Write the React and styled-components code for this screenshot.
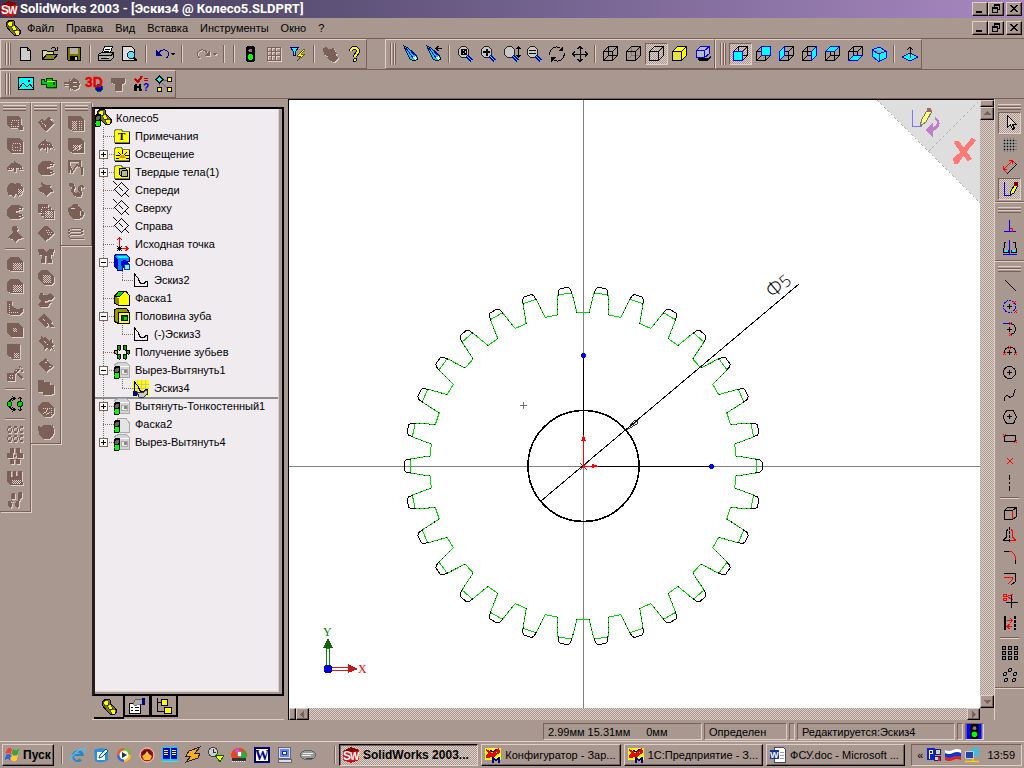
import React, { useState } from "react";
import styled, { createGlobalStyle, css } from "styled-components";

const face = "#a89890";
const dark = "#7b6058";
const light = "#ded0c8";
const dither = `repeating-conic-gradient(${light} 0 25%, ${face} 0 50%) 0 0 / 2px 2px`;

const GlobalStyle = createGlobalStyle`
  * { box-sizing: border-box; }
  body {
    margin: 0;
    background: ${face};
    color: #000;
    font: 11px/14px "Liberation Sans", Arial, sans-serif;
    overflow: hidden;
  }
  button { font: inherit; color: inherit; border: 0; background: none; padding: 0; }
  ul { list-style: none; margin: 0; padding: 0; }
`;

const raised = css`
  background: ${face};
  border: 1px solid;
  border-color: ${light} #000 #000 ${light};
  box-shadow: inset -1px -1px 0 ${dark};
`;
const sunken = css`
  border: 1px solid;
  border-color: ${dark} ${light} ${light} ${dark};
`;

const Screen = styled.div`
  display: flex;
  flex-direction: column;
  min-height: 100vh;
`;
const TitleBar = styled.header`
  display: flex;
  align-items: center;
  gap: 3px;
  height: 18px;
  padding: 0 2px 0 1px;
  background: linear-gradient(90deg, #3c3852, #70608c 50%, #a888c0);
`;
const Title = styled.h1`
  flex: 1;
  margin: 0;
  font-family: Roboto, "Liberation Sans", sans-serif;
  font-size: 13px;
  line-height: 16px;
  color: #fff;
  white-space: nowrap;
`;
const MenuBar = styled.nav`
  display: flex;
  align-items: center;
  height: 20px;
  padding: 0 2px 0 5px;
`;
const MenuItem = styled.button`
  padding: 0 6px;
`;
const Spacer = styled.div`
  flex: 1;
`;
const WindowControls = styled.div`
  display: flex;
  button:last-child {
    margin-left: 2px;
  }
`;
const WinButton = styled.button`
  ${raised}
  display: flex;
  width: 16px;
  height: 14px;
`;
const ToolRow = styled.div`
  display: flex;
  height: ${(p) => p.$height}px;
  border-top: 1px solid ${dark};
`;
const Toolbar = styled.div`
  display: flex;
  align-items: center;
  border: 1px solid;
  border-color: ${light} ${dark} ${dark} ${light};
  box-shadow: 0 1px 0 ${light};
`;
const Grip = styled.div`
  width: 6px;
  height: 22px;
  margin: 0 3px 0 4px;
  border: solid ${dark};
  border-width: 0 1px;
  background: linear-gradient(90deg, ${light} 1px, ${face} 1px 2px, ${dark} 2px 3px, ${light} 3px);
`;
const HGrip = styled.div`
  width: 23px;
  height: 6px;
  margin: 5px auto 2px;
  border: solid ${dark};
  border-width: 0 0 1px;
  background: linear-gradient(${light} 1px, ${face} 1px 2px, ${dark} 2px 3px, ${light} 3px 4px, ${face} 4px);
`;
const Tool = styled.button`
  display: flex;
  align-items: center;
  justify-content: center;
  width: ${(p) => p.$w || 23}px;
  height: 22px;
  ${(p) =>
    p.$on &&
    css`
      ${sunken}
      background: ${dither};
    `}
`;
const Sep = styled.div`
  width: ${(p) => p.$w || 8}px;
  height: 18px;
  background: linear-gradient(90deg, ${dark} 1px, ${light} 1px) center / 2px 100% no-repeat;
`;
const HSep = styled.div`
  height: 8px;
  margin: 0 5px;
  background: linear-gradient(${dark} 1px, ${light} 1px) center / 100% 2px no-repeat;
`;
const Gap = styled.div`
  width: ${(p) => p.$w}px;
`;
const Main = styled.main`
  flex: 1;
  display: grid;
  grid-template-columns: 92px 193px minmax(0, 1fr) 30px;
  border-top: 1px solid ${dark};
`;
const FeatureBars = styled.div`
  display: flex;
  align-items: flex-start;
  padding-top: 3px;
`;
const FeatureBar = styled.div`
  flex: 1;
  display: flex;
  flex-direction: column;
  border: 1px solid;
  border-color: ${light} ${dark} ${dark} ${light};
  border-left: 0;
  box-shadow: 1px 1px 0 ${light};
  > button {
    width: 100%;
    height: 22px;
  }
  > ${HGrip} {
    margin: 2px auto;
  }
`;
const RightBars = styled.div`
  display: flex;
  flex-direction: column;
  border-left: 1px solid ${light};
`;
const RightBar = styled.div`
  border-bottom: 1px solid ${dark};
  box-shadow: 0 1px 0 ${light};
  padding-bottom: 1px;
  > button {
    margin: 0 auto;
  }
`;
const TreePanel = styled.aside`
  display: flex;
  flex-direction: column;
  padding: 8px 1px 0 0;
`;
const TreeFrame = styled.div`
  flex: 1;
  border: solid #000;
  border-width: 2px 2px 2px 3px;
  border-left-color: #2b1e1a;
  padding: 0 3px 2px 0;
  background: ${face};
  display: flex;
`;
const Tree = styled.ul`
  flex: 1;
  border: solid ${light};
  border-width: 0 1px 1px 0;
  background: #efebef;
`;
const TreeRow = styled.li`
  display: flex;
  align-items: center;
  height: 18px;
  box-shadow: ${(p) => (p.$rollback ? "0 2px 0 #8c8c88" : "none")};
  span {
    padding-left: 5px;
    white-space: nowrap;
  }
`;
const dotsV = "repeating-linear-gradient(#85706a 0 1px, transparent 1px 2px)";
const dotsH = "repeating-linear-gradient(90deg, #85706a 0 1px, transparent 1px 2px)";
const Branch = styled.div`
  display: flex;
  align-items: center;
  align-self: stretch;
  width: 19px;
  padding-left: 4px;
  background:
    ${(p) => (p.$through ? "none" : dotsH)} 8px 50% / 11px 1px no-repeat,
    ${dotsV} 8px 0 / 1px ${(p) => (p.$end ? "50%" : "100%")} no-repeat;
`;
const Toggle = styled.button`
  width: 9px;
  height: 9px;
  border: 1px solid #7b6058;
  background:
    linear-gradient(#000, #000) center / 5px 1px no-repeat,
    linear-gradient(#000, #000) center / ${(p) => (p.$open ? 0 : 1)}px 5px no-repeat,
    #fff;
`;
const PanelTabs = styled.div`
  display: flex;
  align-items: flex-start;
  height: 24px;
  padding-left: 2px;
  border-bottom: 1px solid ${light};
`;
const PanelTab = styled.button`
  display: flex;
  align-items: center;
  justify-content: center;
  width: ${(p) => (p.$on ? 30 : 27)}px;
  height: ${(p) => (p.$on ? 23 : 21)}px;
  border: solid #000;
  border-width: ${(p) => (p.$on ? "0 1px 2px 0" : "0 2px 2px 1px")};
`;
const ViewFrame = styled.section`
  display: grid;
  grid-template-columns: minmax(0, 1fr) 14px;
  grid-template-rows: minmax(0, 1fr) 12px;
  margin-left: 3px;
  border: solid #000;
  border-width: 1px 0 0 1px;
`;
const Canvas = styled.svg`
  display: block;
  width: 100%;
  height: 100%;
  min-height: 0;
  background: #fff;
`;
const ScrollBar = styled.div`
  display: flex;
  flex-direction: ${(p) => (p.$vertical ? "column" : "row")};
  background: ${dither};
`;
const SplitBox = styled.div`
  ${raised}
  flex: 0 0 7px;
`;
const ScrollButton = styled.button`
  ${raised}
  flex: 0 0 13px;
  display: flex;
  align-items: center;
  justify-content: center;
`;
const StatusBar = styled.footer`
  display: flex;
  align-items: center;
  justify-content: flex-end;
  gap: 2px;
  height: 21px;
  padding: 2px 40px 0 0;
`;
const Cell = styled.div`
  ${sunken}
  display: flex;
  align-items: center;
  gap: 16px;
  height: 17px;
  width: ${(p) => p.$w}px;
  padding-left: ${(p) => (p.$w > 30 ? 4 : 1)}px;
  white-space: pre;
`;
const TaskBar = styled.footer`
  display: flex;
  align-items: center;
  height: 27px;
  padding: 0 2px;
  border-top: 1px solid ${light};
`;
const StartButton = styled.button`
  ${raised}
  display: flex;
  align-items: center;
  gap: 2px;
  flex: none;
  width: 52px;
  height: 22px;
  padding-left: 2px;
  font-weight: bold;
  font-size: 12px;
`;
const QuickLaunch = styled.div`
  display: flex;
  flex: none;
`;
const Tasks = styled.div`
  flex: 1;
  display: flex;
  gap: 3px;
  padding-right: 6px;
`;
const Task = styled.button`
  ${raised}
  flex: 1;
  display: flex;
  align-items: center;
  gap: 4px;
  min-width: 0;
  height: 22px;
  padding: 0 3px;
  span {
    white-space: nowrap;
    overflow: hidden;
  }
  ${(p) =>
    p.$on &&
    css`
      background: ${dither};
      border-color: #000 ${light} ${light} #000;
      box-shadow: inset 1px 1px 0 ${dark};
      font-weight: bold;
      font-size: 12px;
    `}
`;
const Tray = styled.div`
  ${sunken}
  display: flex;
  align-items: center;
  gap: 3px;
  height: 22px;
  padding: 0 6px 0 5px;
  time {
    padding-left: 4px;
  }
`;

const Svg = styled.svg`
  display: block;
  flex: none;
  overflow: visible;
  ${(p) => p.$off && `filter: drop-shadow(1px 1px 0 ${light});`}
`;

const CUBE = "M.5 5.5h9v9h-9zM5.5.5h9v9h-9zM.5 5.5l5-5M9.5 5.5l5-5M9.5 14.5l5-5M.5 14.5l5-5";
const SOLID = "M.5 5.5h9v9h-9zM.5 5.5l5-5h9v9l-5 5M9.5 5.5l5-5";
const K = { stroke: "#000", fill: "none" };
const R = { stroke: "#f00", fill: "none" };
const B = { stroke: "#00f", fill: "none" };
const L = { stroke: light, fill: "none" };

// checkered patch inside the disabled icons
const mesh = (x, y, w, h) =>
  Array.from({ length: h }, (_, i) => (
    <path key={i} d={`M${x + (i % 2)} ${y + i}.5h${w - (i % 2)}`} stroke={light} strokeDasharray="1 1" />
  ));
const off = (d, extra) => (
  <>
    <path d={d} fillRule="evenodd" />
    {extra}
  </>
);
const cubeFace = (d) => (
  <>
    <path d={CUBE} {...K} />
    <path d={d} fill="#0ff" stroke="#00f" />
  </>
);
const lens = (extra) => (
  <>
    <path d="M10 10l5 5" stroke="#00a" strokeWidth="3" />
    <path d="M10 10l5 5" stroke="#0ff" />
    <circle cx="6.5" cy="6" r="5.5" fill="#c8c8c8" stroke="#222" />
    {extra}
  </>
);
const binoculars = (
  <>
    <path d="M1 0l4 2 8 7 2 4-4 2-4-2-4-8z" fill="#0cd" stroke="#013" />
    <path d="M3 2l7 10M8 6l5 4" stroke="#00f" />
    <path d="M10 11l3-1 1 3-2 1z" fill="#fff" />
  </>
);
const light3 = (
  <>
    <rect x="4" y="0" width="9" height="16" rx="3" fill="#000" />
    <circle cx="8.500" cy="4.500" r="2" fill="#977" />
    <circle cx="8.500" cy="11" r="3" fill="#0f0" />
  </>
);
const smallLight = (
  <>
    <rect x="0" y="4" width="6" height="13" rx="2" fill="#000" />
    <circle cx="3" cy="8" r="2" fill="#666" />
    <circle cx="3" cy="13.500" r="2.500" fill="#0f0" />
  </>
);
const part = (
  <>
    <path d="M1 3l4-3 4 1 1 4 4 4 2 3-2 3-4 1-4-4-5-6z" fill="#770" stroke="#000" />
    <path d="M2 3l4-2 2 2-1 3-3 1zM6 7l3-2 3 4-3 2zM9 11l4-1 2 2-1 3h-3z" fill="#ff0" stroke="#000" strokeWidth=".6" />
  </>
);
const ghostBox = (
  <>
    <path d="M.5 2.500l4-2h8l3 3v12h-11z" fill="#d4d4d4" stroke="#aaa" />
    <path d="M5 4.500h10" stroke="#fff" />
    <path d="M7.500 7.500h6v5h-6z" fill="#ececec" stroke="#aaa" />
    <path d="M10 8h3v3h-3z" fill="#888" />
  </>
);
const ghostChamfer = (
  <path d="M.5 7l4-5h7l4 5v9.500h-11L.5 14z" fill="#e4e4e4" stroke="#aaa" />
);
const folder = (mark) => (
  <>
    <path d="M.5 14.500V3l2-2h4l2 2h7v11.500z" fill="#ff0" stroke="#777" />
    <path d="M1 15h14.500V4" fill="none" stroke="#000" />
    {mark}
  </>
);
const swx = (
  <>
    <path d="M0 4l8-4 8 3v10l-8 3-8-3z" fill="#d01010" />
    <path d="M0 4l8-4 8 3-8 3z" fill="#800" />
    <text x="0" y="13" fontSize="12" fontWeight="bold" fill="#fff">S</text>
    <text x="7" y="13" fontSize="10" fontWeight="bold" fill="#fff">W</text>
  </>
);
const oneC = (
  <>
    <rect width="16" height="12" y="1" fill="#ff0" />
    <path d="M1 3l4 2-2 3 5-1 6-5M1 10l8-1 6-5" stroke="#e00" strokeWidth="2" fill="none" />
    <path d="M5 3l3 2 4-3" stroke="#00c" fill="none" />
    <path d="M8 10v6M8 11l3 2 3-2v5" stroke="#008" fill="none" strokeWidth="1.500" />
  </>
);
const plane = <path d="M.5 7.500l7-7 7 7-7 7zM-.5-.5l4 4M5.500 5.500l4 4M11.500 11.500l4 4" {...K} />;
const sketch = (
  <>
    <path d="M1.500 1v13.500h13V9" {...K} />
    <path d="M1.500 1.500l2 3 2 2 1 4 2 1 3 0 1-2h2" {...K} />
  </>
);

const icons = {
  swx,
  part,
  newDoc: <path d="M2.500 1.500h7l3 3v10h-10zM9.500 1.500v3h3" fill="#ccc" stroke="#000" />,
  open: (
    <>
      <path d="M.5 13.500V4.500h4l1 1h6v3" fill="#dd8" stroke="#000" />
      <path d="M.5 13.500l4-5h11l-4 5z" fill="#880" stroke="#000" />
      <path d="M9 3c2-3 4-2 5 1m-2 0h3V1" {...K} />
    </>
  ),
  save: (
    <>
      <path d="M1.500 1.500h13v13h-12l-1-1z" fill="#770" stroke="#000" />
      <path d="M4 2h8v6H4z" fill="#b8b0a8" />
      <path d="M4 10h8v4H4z" fill="#000" />
      <path d="M9 11h2v3H9z" fill="#ccc" />
    </>
  ),
  print: (
    <>
      <path d="M4.500 6.500l2-6h8l-2 6" fill="#fff" stroke="#000" />
      <path d="M.5 8.500l3-2h12v5l-3 3h-12z" fill="#aaa" stroke="#000" />
      <path d="M1 9.500h12l3-3M7 3h5M6 5h5M3 12.500h8" {...K} />
      <path d="M9 11h2" stroke="#ff0" />
    </>
  ),
  preview: (
    <>
      <path d="M.5.500h9l3 3v11h-12z" fill="#ddd" stroke="#000" />
      <path d="M11 11l4 4" stroke="#000" strokeWidth="2" />
      <circle cx="9" cy="9" r="3.500" fill="#6de" stroke="#222" />
    </>
  ),
  undo: (
    <>
      <path d="M2 4v6h6z" fill="#000090" />
      <path d="M5 7c2-4 8-4 9-1 1 3 0 5-2 6" stroke="#000090" fill="none" />
    </>
  ),
  redo: (
    <g filter={`drop-shadow(1px 1px 0 ${light})`}>
      <path d="M14 4v6H8z" fill="#7b6058" />
      <path d="M11 7C9 3 3 3 2 6c-1 3 0 5 2 6" stroke="#7b6058" fill="none" />
    </g>
  ),
  drop: <path d="M0 7h5L2.500 10z" fill="#000" />,
  dropOff: <path d="M0 7h5L2.500 10z" />,
  light3,
  gridOff: <path d="M1.500 1.500h13v13h-13zM1.500 5.500h13M1.500 9.500h13M5.500 1.500v13M9.500 1.500v13" fill="none" stroke="#7b6058" />,
  filter: (
    <>
      <path d="M.5 1.500h8l-3 4v4h-2v-4z" fill="#0ff" stroke="#006" />
      <path d="M14 3L7 10h4l-4 5 8-7h-4l4-4z" fill="#ff0" stroke="#330" strokeWidth=".7" />
    </>
  ),
  macroOff: <path d="M1 2l3-1 3 2 5-1 1 4 2 1-1 3 2 2-2 3-3 1-3-1-1-2-3-1 2-2-4-1z" />,
  help: (
    <>
      <path d="M5 5c0-4 7-4 7 0 0 3-3 3-3 6" fill="none" stroke="#000" strokeWidth="4" />
      <path d="M5 5c0-4 7-4 7 0 0 3-3 3-3 6" fill="none" stroke="#ff0" strokeWidth="2" />
      <circle cx="9" cy="14" r="1.500" fill="#ff0" stroke="#000" />
    </>
  ),
  binoculars,
  binocularsBack: (
    <>
      {binoculars}
      <path d="M10 2.500h6M12.500 0L10 2.500 12.500 5" {...K} />
    </>
  ),
  zoomFit: lens(<path d="M4 3.500h5v5H4zM4 3.500l5 5m0-5l-5 5" {...K} />),
  zoomIn: lens(<path d="M3 6h7M6.500 2.500v7" stroke="#000" strokeWidth="2" />),
  zoomDyn: lens(<path d="M15.500 1v10M13.500 3l2-2 2 2M13.500 9l2 2 2-2" {...K} />),
  zoomSel: lens(<path d="M3 4.500h7M3 7.500h7" stroke="#000" strokeWidth="1.500" />),
  rotate: (
    <>
      <path d="M1 9C0 3 6-1 11 2M15 7c1 6-5 10-10 7" {...K} />
      <path d="M14 0v5H9zM2 16v-5h5z" />
    </>
  ),
  pan: <path d="M8 0v16M0 8h16M5.500 3L8 .5 10.500 3M5.500 13L8 15.500 10.500 13M3 5.500L.5 8 3 10.500M13 5.500L15.500 8 13 10.500" {...K} />,
  wire: <path d={CUBE} {...K} />,
  hiddenGray: (
    <>
      <path d={CUBE} stroke="#777" fill="none" />
      <path d={SOLID} {...K} />
    </>
  ),
  hidden: <path d={SOLID} {...K} />,
  shaded: (
    <>
      <path d={SOLID} fill="#ff0" stroke="#000" />
      <path d="M1 6h8v8H1z" fill="#e8e040" />
    </>
  ),
  shadow: (
    <>
      <path d="M3 12h10l3-3v3l-4 3H4z" fill="#000" />
      <path d="M1.500 4.500h8v7h-8zM1.500 4.500l4-4h9v7l-5 4M9.500 4.500l5-4" fill="#bbb" stroke="#00f" />
    </>
  ),
  front: cubeFace("M.5 5.500h9v9h-9z"),
  back: cubeFace("M5.500.500h9v9h-9z"),
  left: cubeFace("M.5 5.500l5-5v9l-5 5z"),
  right: cubeFace("M9.500 5.500l5-5v9l-5 5z"),
  top: cubeFace("M.5 5.500l5-5h9l-5 5z"),
  bottom: cubeFace("M.5 14.500l5-5h9l-5 5z"),
  iso: <path d="M1 4l7-3 7 4v7l-7 3.500L2 11zM1 4l7 4 7-3M8 8v7.500" fill="#0ff" stroke="#00f" />,
  normal: (
    <>
      <path d="M0 11l8-4 8 4-8 4z" fill="#0ff" stroke="#00c" />
      <path d="M8 12V1M5 4l3-3 3 3" {...K} />
    </>
  ),
  picture: (
    <>
      <rect x=".5" y="1.500" width="15" height="12" fill="#0ff" stroke="#000" />
      <path d="M1 12l4-5 4 4 3-3 3 4" {...K} />
      <circle cx="11" cy="5" r="1" />
    </>
  ),
  camera: (
    <>
      <path d="M4 11h12v2H6z" fill="#776" />
      <path d="M0 3h3v2h2V2h6v2h4v7H5V8H0z" fill="#0c0" stroke="#030" />
      <path d="M6 5h8" stroke="#cf0" />
      <path d="M12 6h2v3h-2z" fill="#030" />
    </>
  ),
  plugOff: off("M0 6h5V3h1v2l4-3 4 2 2 4-2 5-4 1-4-2v2H5v-4H0V9h5V8H0z", <path d="M9 6h4M9 10h4" {...L} />),
  threeD: (
    <>
      <circle cx="12" cy="12" r="3.500" fill="#00c" stroke="#060" />
      <text x="-2" y="11" fontSize="14" fontWeight="bold" fill="#e00" stroke="#e00" strokeWidth=".4">3D</text>
    </>
  ),
  boltOff: off("M1 2h14v5l-3 1v7H5V8L1 7z"),
  check: (
    <>
      <path d="M2 3l3 3 4-6" stroke="#c00" strokeWidth="2" fill="none" />
      <path d="M11 2.500h4M11 4.500h4" stroke="#c00" />
      <path d="M2 8h2v2h2V8h2v3l1 4H6v-3H4v3H1v-4z" />
      <text x="10" y="15" fontSize="10" fontWeight="bold" fill="#00c">?</text>
    </>
  ),
  nodes: (
    <>
      <path d="M7 4h4M6 7l5 5M3 7v3" stroke="#666" />
      <path d="M0 3.500L3.500 0 7 3.500 3.500 7z" fill="#0ff" stroke="#000" />
      <path d="M11.500 1.500h4v4h-4zM11.500 11.500h4v4h-4zM1.500 11.500h4v4h-4z" fill="#ff0" stroke="#000" />
    </>
  ),
  pointer: <path d="M5.500.500v12l3-3 2 5 2-1-2-4h4z" fill={light} stroke="#000" />,
  gridDots: (
    <>
      <path d="M2.500 1v14M5.500 1v14M8.500 1v14M11.500 1v14M1 3.500h14M1 6.500h14M1 9.500h14M1 12.500h14" stroke="#777" fill="none" />
      <path d="M2 3.500h12M2 6.500h12M2 9.500h12M2 12.500h12" stroke="#000" strokeDasharray="1 2" />
    </>
  ),
  dimension: (
    <>
      <path d="M5.500 14.500l9-9M3 12l3 3M12 3l3 3" {...K} />
      <path d="M1.500 10.500l9-9M1.500 7v3.500H5M7 1.500h3.500V5M1 10l4 4M10.500 1.500l3 3" {...R} />
    </>
  ),
  sketchPen: (
    <>
      <path d="M2.500 1v13.500h6" {...B} />
      <path d="M8 14l1-4 4-7 3 1-4 8z" fill="#ff0" stroke="#000" />
      <circle cx="14" cy="3" r="2.500" fill="#700" />
    </>
  ),
  perp: (
    <>
      <path d="M7.500 2v12M2 13.500h12" {...B} />
      <path d="M8 10.500h2.500v3" {...R} />
    </>
  ),
  glasses: (
    <>
      <path d="M7.500 0v14M1 14.500h14" {...B} />
      <path d="M4 2.500H2.500V8M1.500 7.500v5h5v-3M11 2.500h2.500V8M14.500 7.500v5h-5v-3" {...K} />
      <path d="M3 10h3v2H3zM10 10h3v2h-3z" fill="#0ff" />
    </>
  ),
  line: <path d="M3 3l11 11" {...K} />,
  arcCenter: (
    <>
      <circle cx="7.500" cy="7.500" r="6" {...B} strokeDasharray="2 1" />
      <path d="M7.500 5v5M5 7.500h5" {...K} />
      <path d="M11 2l3 3m0-3l-3 3M12 11l3 3m0-3l-3 3" {...R} />
    </>
  ),
  arcTangent: (
    <>
      <path d="M1 2.500h7" {...B} />
      <path d="M8 2.500a5.500 5.500 0 010 11M7.500 6v5M5 8.500h5" {...K} />
      <path d="M7 1l3 3m0-3L7 4M7 12l3 3m0-3l-3 3" {...R} />
    </>
  ),
  arc3: (
    <>
      <path d="M2 10a6 6 0 0112 0M7.500 7v5M5 9.500h5" {...K} />
      <path d="M1 9l3 3m0-3l-3 3M12 9l3 3m0-3l-3 3M6 3l3 3m0-3L6 6" {...R} />
    </>
  ),
  circle: <path d="M7.500 1.500a6 6 0 100 12 6 6 0 100-12M7.500 5v5M5 7.500h5" {...K} />,
  spline: <path d="M2 14c0-3 2-6 3-6s1 3 4 2c4 0 2-4 4-7V2" {...K} />,
  polygon: <path d="M4.500 1.500h7L14.500 8l-3 6.500h-7L1 8zM7.500 5v5M5 7.500h5" {...K} />,
  rect: (
    <>
      <path d="M2.500 4.500h11v6h-11z" {...K} />
      <path d="M1 3l3 3m0-3L1 6M12 9l3 3m0-3l-3 3" {...R} />
    </>
  ),
  point: <path d="M5 5l6 6M11 5l-6 6" {...R} />,
  centerline: <path d="M7.500 0v16" {...K} strokeDasharray="5 2 2 2" />,
  convert: (
    <>
      <path d="M2.500 5.500h8v9h-8zM2.500 5.500l3-3h9v9l-4 3M10.500 5.500l4-3" {...K} />
      <path d="M10.500 6v8" {...R} />
    </>
  ),
  mirror: (
    <>
      <path d="M7.500 0v16" {...K} strokeDasharray="3 1" />
      <path d="M6 2.500L4.500 4v6L1.500 13v.5H7" {...K} />
      <path d="M9 2.500L10.500 4v6l3 3v.5H8" {...R} />
    </>
  ),
  fillet: (
    <>
      <path d="M2 2.500h5M13.500 10v5" {...K} />
      <path d="M7 2.500c4 0 6.500 3 6.500 8" {...R} />
    </>
  ),
  offset: (
    <>
      <path d="M2 2.500h11.500v8L9 14" {...K} />
      <path d="M2 6.500h8.500v2L6 13" {...R} />
    </>
  ),
  trim: (
    <>
      <path d="M4 4l7-3M4 3l7 4M1.500 1.500h3v2h-3zM1.500 5.500h3v2h-3z" {...R} />
      <path d="M9.500 2v13M4 9.500h12" {...K} />
    </>
  ),
  extend: (
    <>
      <path d="M3 1v14" stroke="#000" strokeWidth="2" />
      <path d="M13 1v14" stroke="#000" strokeWidth="2" strokeDasharray="3 1" />
      <path d="M5 5.500h5M8 3l2.500 2.500L8 8M5 11.500h5M7.500 9L5 11.500 7.500 14" {...R} />
    </>
  ),
  pattern: <path d="M.5 1.500h3v3h-3zM6.500 1.500h3v3h-3zM12.500 1.500h3v3h-3zM.5 6.500h3v3h-3zM6.500 6.500h3v3h-3zM12.500 6.500h3v3h-3zM.5 11.500h3v3h-3zM6.500 11.500h3v3h-3zM12.500 11.500h3v3h-3z" fill="#888" stroke="#000" strokeWidth="1.300" />,
  circPattern: (
    <g fill="#999" stroke="#000">
      <circle cx="8" cy="3" r="1.500" />
      <circle cx="3" cy="7" r="1.500" />
      <circle cx="13" cy="7" r="1.500" />
      <circle cx="4" cy="13" r="1.500" />
      <circle cx="12" cy="13" r="1.500" />
    </g>
  ),
  moveGreen: (
    <>
      <path d="M7 2.500H5L2.500 5v6L5 13.500h2M5 0l3 2.500L5 5M5 11l3 2.500L5 16M13 1v14M11 3l2-2 2 2M11 13l2 2 2-2" {...K} />
      <circle cx="2.500" cy="8" r="2.500" fill="#0d0" stroke="#030" />
      <circle cx="13" cy="8" r="2.500" fill="#0d0" stroke="#030" />
    </>
  ),
  partLight: (
    <>
      <g transform="translate(1 -1)">{part}</g>
      {smallLight}
    </>
  ),
  notes: folder(<text x="4" y="12" fontSize="11" fontWeight="bold" fontFamily="Liberation Serif, serif">T</text>),
  lighting: folder(
    <>
      <path d="M5 12c0-4 7-4 7 0z" fill="#e80" />
      <path d="M2 12.500h3M12 12.500h3M4 6l3 3M13 6l-3 3M8.500 4v4M2 9.500h4M11 9.500h4" {...K} />
    </>
  ),
  bodies: folder(<path d="M5.500 4.500h6l2 2v6h-6l-2-2zM7.500 6.500h6M7.500 6.500v6" fill="#bb8" stroke="#000" />),
  plane,
  origin: (
    <>
      <path d="M5.500 11V2M3 4l2.500-2.500L8 4M6 12.500h8M11.500 10l2.500 2.500-2.500 2.500" {...R} />
      <path d="M3 12.500h5M5.500 10v5M3 10l5 5m0-5l-5 5" {...K} />
    </>
  ),
  base: (
    <>
      <path d="M0 2l3 3v11l-3-3z" fill="#00c" />
      <path d="M0 2l3-2h9l3 3v4h-4v3H8v6H3V5z" fill="#08f" stroke="#008" />
      <path d="M1 1.500h10l3 2H4z" fill="#0ff" />
      <path d="M7 7l4-1 4 4v5h-5l-3-4z" fill="#00c" />
      <path d="M10.500 10.500h5v5h-5z" fill="#8ef" stroke="#04c" />
    </>
  ),
  sketch,
  chamfer: (
    <>
      <path d="M.5 6L5 1h7l3.500 5v9.500h-10l-5-2z" fill="#ff0" stroke="#000" />
      <path d="M1 6l4-5 5 1-5 5z" fill="#0d0" stroke="#000" />
      <path d="M1 7l4 1v7l-4-2z" fill="#880" />
    </>
  ),
  tooth: (
    <>
      <path d="M.5 1.500l3-1h9l3 4v11h-11l-4-2z" fill="#990" stroke="#000" />
      <path d="M4.500 4.500h11v11h-11z" fill="#ff0" stroke="#000" />
      <path d="M7.500 7.500h6v5h-6z" fill="#050" stroke="#000" />
      <path d="M10 9h3v3h-3z" fill="#0d0" />
    </>
  ),
  teeth: (
    <g fill="#0a0" stroke="#000">
      <rect x="3.500" y="1" width="3" height="5" rx="1" />
      <rect x="9.500" y="1" width="3" height="5" rx="1" />
      <rect x="3.500" y="10" width="3" height="5" rx="1" />
      <rect x="9.500" y="10" width="3" height="5" rx="1" />
      <rect x=".5" y="6" width="3" height="4" rx="1" fill="#cc0" />
      <rect x="12.500" y="6" width="3" height="4" rx="1" />
    </g>
  ),
  ghost: (
    <>
      {ghostBox}
      {smallLight}
    </>
  ),
  ghostRound: (
    <>
      {ghostChamfer}
      {smallLight}
    </>
  ),
  sketchActive: (
    <>
      <path d="M0 0h16v16H0z" fill="#ff0" />
      <path d="M4.500 0v16M8.500 0v16M12.500 0v16M0 4.500h16M0 8.500h16" stroke="#cc8" />
      {sketch}
      <path d="M4 12l5 1 5-3 1 3-4 4H6z" fill="#ccc" stroke="#333" />
      <path d="M0 11h4v5H0z" fill="#008" />
    </>
  ),
  property: (
    <>
      <path d="M.5 5.500h11v10H.5z" fill="#fff" stroke="#000" />
      <path d="M2 9.500h2M6 9.500h4M2 12.500h2M6 12.500h4" stroke="#000" />
      <path d="M4 5l3-4h6v5H9L6 8z" fill="#aaa" stroke="#333" strokeWidth=".6" />
      <path d="M13 0h3v7h-3z" fill="#008" />
    </>
  ),
  config: (
    <>
      <path d="M1.500 0v13.500H8M1.500 4.500H6" {...K} />
      <path d="M5.500 1.500h6v6h-6zM8.500 9.500h7v6h-7z" fill="#ff0" stroke="#000" />
    </>
  ),
  windows: (
    <>
      <path d="M2 2q3-2 5 0L6 7Q4 5 1 7z" fill="#e43" />
      <path d="M8 2q3 2 6 0l-1 5q-3 2-6 0z" fill="#3a3" />
      <path d="M1 8q3-2 5 0l-1 5q-2-2-5 0z" fill="#36d" />
      <path d="M7 8q3 2 6 0l-1 5q-3 2-6 0z" fill="#fc2" />
    </>
  ),
  ie: (
    <g shapeRendering="auto">
      <path d="M4 9h10a6 6 0 10-2 4.500L9.500 11.500A3 3 0 014 10zM4.500 7a3 3 0 015.500 0z" fill="#28c" fillRule="evenodd" />
      <path d="M1 15c-3-3 7-13 13-14 3 0 1 3 0 5" fill="none" stroke="#5be" strokeWidth="1.300" />
    </g>
  ),
  mail: (
    <g shapeRendering="auto">
      <path d="M1 3q5-3 12-1l2 2v9q-6 4-13 1z" fill="#2a8fe0" />
      <path d="M4 5h8v8H4z" fill="#fff" />
      <path d="M6 11l1-3 6-6 2 2-6 6z" fill="#dff" stroke="#05a" />
    </g>
  ),
  media: (
    <g shapeRendering="auto">
      <path d="M8 8V1a7 7 0 017 7z" fill="#7b3" />
      <path d="M8 8h7a7 7 0 01-7 7z" fill="#fb2" />
      <path d="M8 8v7a7 7 0 01-7-7z" fill="#36d" />
      <path d="M8 8H1a7 7 0 017-7z" fill="#e52" />
      <circle cx="8" cy="8" r="4.500" fill="#fff" />
      <path d="M6 5l5 3-5 3z" fill="#234" />
    </g>
  ),
  flame: (
    <g shapeRendering="auto">
      <circle cx="8" cy="8" r="7" fill="#b11" stroke="#edd" />
      <circle cx="8" cy="8" r="5" fill="#511" />
      <path d="M3 9l3-2 2-3 2 3 3 2-2 4H5z" fill="#fb3" />
    </g>
  ),
  commander: (
    <>
      <path d="M.5.500h15v12H.5z" fill="#00c" stroke="#0cf" />
      <path d="M8 1v12M0 14.500h16" stroke="#0ff" />
      <path d="M2 3.500h4M2 5.500h4M2 7.500h4M10 3.500h4M10 5.500h4M10 7.500h4" stroke="#ff0" />
    </>
  ),
  winamp: <path d="M15 0L4 4 1 9h5l-5 6L13 11l2-5h-5z" fill="#f9b020" stroke="#222" />,
  search: (
    <>
      <circle cx="5" cy="5" r="4.500" fill="#ccc" stroke="#444" />
      <path d="M5 2v3h3M9 9l3 4" stroke="#333" fill="none" />
      <path d="M7 8h9l-4 7z" fill="#ff0" stroke="#060" />
    </>
  ),
  disc: (
    <>
      <path d="M1 11a7 7 0 017-10 7 7 0 017 10z" fill="#e42" />
      <path d="M9 7l5-4 1 8h-5z" fill="#1b3" />
      <path d="M8 7L3 4l5-3z" fill="#b5f" />
      <circle cx="8.500" cy="7" r="2.500" fill="#fff" stroke="#888" />
      <path d="M1 11h14v3H1z" fill="#333" />
      <path d="M1 14.500h14" stroke="#fff" strokeDasharray="1 1" />
    </>
  ),
  word: (
    <>
      <path d="M0 0h16v16H0z" fill="#008" />
      <path d="M1.500 1.500h13v13h-13z" fill="#fff" stroke="#003" />
      <text x="1" y="13" fontSize="14" fontWeight="bold" fontFamily="Liberation Serif, serif" fill="#008">W</text>
    </>
  ),
  monitor: (
    <>
      <path d="M1.500.500h12v11h-12zM1.500 12.500h13v3h-13z" fill="#dde" stroke="#667" />
      <path d="M3 2h9v8H3z" fill="#68d" />
      <circle cx="7.500" cy="6" r="2" fill="#fff" stroke="#13a" />
    </>
  ),
  oval: (
    <>
      <ellipse cx="8" cy="8" rx="7.500" ry="5" fill="#999" stroke="#666" />
      <path d="M3 6h10M2 8h9" stroke="#eee" />
      <path d="M6 11h7" stroke="#444" />
    </>
  ),
  oneC,
  doc: (
    <>
      <path d="M4.500.500h9l2 2v13h-11z" fill="#fff" stroke="#446" />
      <path d="M10 5h4M10 8h4M10 11h4" stroke="#99b" />
      <path d="M0 3h9v9H0z" fill="#139" />
      <text x="0" y="11" fontSize="9" fontWeight="bold" fill="#fff">W</text>
    </>
  ),
  netLight: (
    <>
      <path d="M1 1h8v12H1z" fill="#12c" />
      <path d="M3.500 3v9M3.500 3.500h3v3h-3" stroke="#fff" fill="none" />
      <path d="M9 2h5v5H9zM8 9h6v4H8z" fill="#ccd" stroke="#225" />
      <path d="M12 10h2v4h-2z" fill="#d22" />
    </>
  ),
  flag: (
    <g shapeRendering="auto">
      <path d="M0 3q4 2 8 0t8 0v5H0z" fill="#fff" />
      <path d="M0 6q4 2 8 0t8 0v4q-4-2-8 0T0 10z" fill="#13c" />
      <path d="M0 10q4 2 8 0t8 0v3q-4-2-8 0t-8 0z" fill="#d22" />
    </g>
  ),
  netPc: (
    <g shapeRendering="auto">
      <circle cx="11" cy="5" r="4.500" fill="#4bd" />
      <path d="M1.500 4.500h8v7h-8z" fill="#24a" stroke="#ccc" />
      <path d="M1 14.500h14M9 11v3" stroke="#fc0" strokeWidth="1.500" />
    </g>
  ),
  cutOff: off("M0 0h11l3 3v6l2 2v3h-4l-1-2H4l-4-3z", <path d="M4.500 4.500h7v6h-7z" {...L} strokeDasharray="1 1" />),
  boxOff: off("M0 0h12l4 4v11H5l-5-4z", <path d="M5.500 5.500h8v7h-8zM8 9h3" {...L} strokeDasharray="1 1" />),
  revolveOff: off("M8 0l1 3c4 0 6 3 7 7h-4l-2-2h-1l-1 8-1-8H6l-2 2H0c0-4 3-7 7-7z", <path d="M2 8.500h3M11 8.500h3" {...L} strokeDasharray="1 1" />),
  sphereOff: off("M3 1h4l1 2 1-2h4l3 5-1 6-4 2-2-3-2 4-3-2H1l-1-7z", mesh(11, 7, 4, 5)),
  sweepOff: off("M4 1h8l4 2-1 3-6 1v2l6 1 1 3-4 2H3l-3-4V5z", <path d="M12 4.500h2M12 12.500h2" {...L} />),
  bellOff: off("M6 0h4l1 3-1 3 6 6-5 1-3 3-3-3-5-1 6-6-1-3z"),
  domeOff: off("M0 4l4-3h7l5 5v9H4l-4-2z", mesh(6, 7, 9, 7)),
  cornerOff: off("M0 1h5v5l5 3 6-1v4l-4 3H4l-4-2z", <path d="M2 12.500h9M2.500 4v8" {...L} strokeDasharray="1 1" />),
  holeOff: off("M0 1h11l5 4v10H5l-5-4z", mesh(6, 6, 4, 4)),
  shellOff: off("M0 0h13v15H6l-6-4z", mesh(7, 9, 5, 5)),
  wandOff: off("M0 7h8v8H0zM9 8l2-2 5 6-2 1zM8 3h2v2H8zM12 0h2v3h-2zM14 4h2v2h-2zM6 6l8-5 1 1-7 6z", <path d="M2.500 9.500h3v3h-3z" {...L} strokeDasharray="1 1" />),
  patternOff: off("M1 0h3v7H1zM7 0h3v7H7zM13 0h3v7h-3zM1 9h3v7H1zM7 9h3v7H7zM13 9h3v7h-3zM0 2h5v3H0zM6 2h5v3H6zM12 2h4v3h-4zM0 11h5v3H0zM6 11h5v3H6zM12 11h4v3h-4z"),
  circleOff: off("M3 0h4v5H3zM9 0h4v5H9zM0 5h6v5H0zM10 5h6v5h-6zM3 11h4v5H3zM9 11h4v5H9zM7 7h2v2H7z"),
  blockOff: off("M0 1h4v6h2V1h3v5h2V1h4v7l1 7H4l-4-3z", mesh(5, 10, 9, 4)),
  dropsOff: off("M5 1h3v6H4V3zM12 0h3v5l-1 2h-3V3zM1 9h4v5l-2 2-2-2zM9 9h3v5l-2 2-2-2zM4 8l2 1-2 2zM11 7h2v2h-2z"),
  surfOff: off("M0 6l4-3 2 2 5-5 2 3-1 1 4 4-6 5-2 3-5-6z", <path d="M3 5.500l5 5M12 3h4" {...L} strokeDasharray="1 1" />),
  umbrellaOff: off("M8 0v3l5 2 3 6-3-1-2 1-2-2v5H8V9l-2 3-2-2-3 2-1-4 3-4 4-2z", <path d="M3 6.500h4M9 6.500h4" {...L} strokeDasharray="1 1" />),
  starOff: off("M0 6l4-1-1-5 5 3h5l-1 3 4 3-5 2-3 3-3-3-3-1z"),
  layersOff: off("M0 0h10v3h3v3h3v9H6v-3H3V9H0z", <><path d="M3.500 3.500h7v6h-7z" {...L} strokeDasharray="1 1" />{mesh(7, 7, 8, 7)}</>),
  diamondOff: off("M0 7l6-7h4l6 7-6 6-3 2-3-3z", <><path d="M8 4h4M9 6h5M10 8h4" {...L} strokeDasharray="1 1" /></>),
  vestOff: off("M0 1h5l3 3 3-3h5l-1 6h-2l1 8H9V8H7v7H3l1-8H1z"),
  roundOff: off("M0 3l3-3h6l7 6v6l-3 3H7L0 9z", mesh(5, 5, 8, 8)),
  splitOff: off("M2 1h3v2h4l4-2 3 4-3 3-6 1v2l6-1-3 5H2l-2-3 3-3-2-3z"),
  plateOff: off("M0 5l6-5 8 8-1 2 3 3h-4l-2-2-2 3z", <path d="M5 5l3 3M9 9l2 2" {...L} strokeDasharray="1 1" />),
  stripOff: off("M0 5l3-2V0l2 2 2-1 4 4 3-2v3l2 3-2 1 2 4-3-2-2 2-2-2-3 2v-3z", <path d="M6 5l4 4" {...L} strokeDasharray="1 1" />),
  kiteOff: off("M0 6l8-6 3 5 5 3-8 6-4-4z", <path d="M7 4h2M11 8h2" {...L} />),
  stepOff: off("M0 0h6v2h6v3h4v9h-2v1H5v-3H0z"),
  hatchOff: off("M0 4l4-4h6l6 6v5l-4 4H6L0 9z", <path d="M5 12l7-6M8 13l5-4M5 6h8v8" {...L} strokeDasharray="1 1" />),
  potOff: off("M0 2l3 1 3-2h5l3 1 1-2 1 8-1 4-4 3H5l-4-4z"),
  bookOff: off("M0 0h12l4 4v11H5l-5-3z", <>{mesh(4, 5, 5, 9)}<path d="M11.500 5v9M13.500 5v9" {...L} strokeDasharray="1 1" /></>),
  sheetOff: off("M0 0h12l4 4v11H5l-5-3z", <>{mesh(5, 7, 8, 3)}<path d="M5 13l9-7M9 13l5-4" {...L} /></>),
  curveOff: <path d="M1 13V1h11v5l-3-1-5 7-2-6M9 5l5 3v7" fill="none" stroke={dark} strokeWidth="1.500" />,
  snakeOff: <path d="M1 2h3l2 4-2 2 3 5 5 1 1-4-2-3 2-3 3 1M4 4L1 3M9 13l1-3" fill="none" stroke={dark} strokeWidth="2.500" />,
  kettleOff: off("M0 4l4-2 1-2h5l1 3 3 3 2 3-1 4-4 2H5l-4-4z", <path d="M3 4.500h4M12 7v5" {...L} />),
  springOff: <path d="M2.500 2.500h10l2 1.500-2 1.500h-10L.5 7l2 1.500h10M2.500 8.500l-2 2 2 2h12M2.500 2.500L.5 4l2 1.500M12.500 8.500l2-1.500-2-1.500M14 12.500h2" fill="none" stroke={dark} />,
};

const Icon = ({ name, size = 16 }) => {
  const disabled = name.endsWith("Off");
  return (
    <Svg
      width={size}
      height={size}
      viewBox="0 0 16 16"
      fill={disabled ? dark : "#000"}
      shapeRendering="crispEdges"
      $off={disabled}
      aria-hidden="true"
    >
      {icons[name]}
    </Svg>
  );
};

const renderTools = (names, on = [], w) =>
  names.map((name, i) =>
    name === "|" ? (
      w === "col" ? <HSep key={i} /> : <Sep key={i} />
    ) : (
      <Tool key={i} $w={w === "col" ? 23 : w} $on={on.includes(name)} aria-label={name}>
        <Icon name={name} />
      </Tool>
    )
  );

const viewTools = "binoculars binocularsBack | zoomFit zoomIn zoomDyn zoomSel rotate pan | wire hiddenGray hidden shaded shadow".split(" ");
const orientTools = "front back left right top bottom iso | normal".split(" ");
const extraTools = "picture camera plugOff threeD boltOff check nodes".split(" ");
const featureColumns = [
  "cutOff boxOff revolveOff sphereOff sweepOff bellOff | domeOff domeOff cornerOff holeOff shellOff wandOff | moveGreen | patternOff circleOff blockOff dropsOff",
  "surfOff umbrellaOff sweepOff starOff layersOff diamondOff vestOff roundOff splitOff plateOff stripOff kiteOff stepOff hatchOff potOff",
  "bookOff sheetOff curveOff snakeOff kettleOff springOff",
].map((s) => s.split(" "));
const sketchBars = [
  "pointer gridDots dimension sketchPen",
  "perp glasses",
  "line arcCenter arcTangent arc3 circle spline polygon rect point centerline | convert mirror fillet offset trim extend | pattern circPattern",
].map((s) => s.split(" "));

const menuItems = ["Файл", "Правка", "Вид", "Вставка", "Инструменты", "Окно", "?"];

const treeItems = [
  { text: "Примечания", icon: "notes" },
  { text: "Освещение", icon: "lighting", toggle: "+" },
  { text: "Твердые тела(1)", icon: "bodies", toggle: "+" },
  { text: "Спереди", icon: "plane" },
  { text: "Сверху", icon: "plane" },
  { text: "Справа", icon: "plane" },
  { text: "Исходная точка", icon: "origin" },
  { text: "Основа", icon: "base", toggle: "-" },
  { text: "Эскиз2", icon: "sketch", child: true },
  { text: "Фаска1", icon: "chamfer" },
  { text: "Половина зуба", icon: "tooth", toggle: "-" },
  { text: "(-)Эскиз3", icon: "sketch", child: true },
  { text: "Получение зубьев", icon: "teeth" },
  { text: "Вырез-Вытянуть1", icon: "ghost", toggle: "-" },
  { text: "Эскиз4", icon: "sketchActive", child: true, rollback: true },
  { text: "Вытянуть-Тонкостенный1", icon: "ghost", toggle: "+" },
  { text: "Фаска2", icon: "ghostRound" },
  { text: "Вырез-Вытянуть4", icon: "ghost", toggle: "+", last: true },
];

const quickIcons = ["ie", "mail", "media", "flame", "commander", "winamp", "search", "disc", "word", "monitor", "oval"];
const tasks = [
  { text: "SolidWorks 2003...", icon: "swx" },
  { text: "Конфигуратор - Зар...", icon: "oneC" },
  { text: "1С:Предприятие - З...", icon: "oneC" },
  { text: "ФСУ.doc - Microsoft ...", icon: "doc" },
];

const Controls = () => (
  <WindowControls>
    <WinButton aria-label="Свернуть">
      <Svg width="14" height="12" shapeRendering="crispEdges">
        <path d="M3 8h6v2H3z" />
      </Svg>
    </WinButton>
    <WinButton aria-label="Восстановить">
      <Svg width="14" height="12" shapeRendering="crispEdges">
        <path d="M5 1h6v2H5zM5 3h1v1H5zM10 3h1v4h-2V6h1zM3 4h6v2H3zM3 6h1v4H3zM8 6h1v4H8zM3 9h6v1H3z" />
      </Svg>
    </WinButton>
    <WinButton aria-label="Закрыть">
      <Svg width="14" height="12" shapeRendering="crispEdges">
        <path d="M3.500 2l7 7M10.500 2l-7 7" stroke="#000" strokeWidth="1.600" />
      </Svg>
    </WinButton>
  </WindowControls>
);

// Gear outline: every tooth is given as (radius, half width) pairs
const CX = 583;
const CY = 466;
const TEETH = 30;
const at = (deg, r, t) => {
  const a = (deg * Math.PI) / 180;
  const x = CX + r * Math.cos(a) - t * Math.sin(a);
  const y = CY + r * Math.sin(a) + t * Math.cos(a);
  return `${x.toFixed(1)} ${y.toFixed(1)}`;
};
const angles = Array.from({ length: TEETH }, (_, i) => (i * 360) / TEETH);
const rootPath =
  angles
    .map((a, i) => `${i ? "L" : "M"}${at(a, 153, -10)}L${at(a, 173, -7)}L${at(a, 173, 7)}L${at(a, 153, 10)}`)
    .join("") + "Z";
const flankPath = angles
  .map((a) => `M${at(a, 153, -10)}L${at(a, 173, -7)}M${at(a, 153, 10)}L${at(a, 173, 7)}`)
  .join("");
const tipPath = angles
  .map((a) => `M${at(a, 172, -7)}L${at(a, 177, -6)}L${at(a, 179, -4)}L${at(a, 179, 4)}L${at(a, 177, 6)}L${at(a, 172, 7)}`)
  .join("");

const Drawing = () => (
  <Canvas viewBox="289 100 691 608" shapeRendering="crispEdges" fill="none" aria-label="Эскиз4">
    <path d="M289 466.500h691M583.500 100v608" stroke="#808080" />
    <path d={rootPath} stroke="#00d800" />
    <path d={flankPath} stroke="#000" strokeDasharray="1 4" />
    <path d={tipPath} stroke="#000" />
    <path d="M583.500 356v80M639 466.500h72M598 466.500h41" stroke="#000" />
    <circle cx="583.500" cy="466" r="55.500" stroke="#000" strokeWidth="1.600" />
    <path d="M541 501L799 284" stroke="#000" />
    <path d="M626 430l8-9 4-1-1 4zM630 427l7-6" stroke="#000" strokeWidth=".8" />
    <path d="M583.500 466v-30M583 466.500h15M580 463l7 7M587 463l-7 7" stroke="#f00" />
    <path d="M581 441h5l-2.500-6zM592 463.500v5l6-2.500z" fill="#f00" />
    <circle cx="583.500" cy="355.500" r="2.500" fill="#00f" />
    <circle cx="711.500" cy="466.500" r="2.500" fill="#00f" />
    <path d="M520 405.500h7M523.500 402v7" stroke="#707070" />
    <text
      transform="translate(773 299) rotate(-40)"
      fontFamily="Open Sans, sans-serif"
      fontWeight="300"
      fontSize="21"
      fill="#000"
    >
      Φ<tspan fontSize="17">5</tspan>
    </text>
    <g>
      <path d="M326.500 668v-20h3v20z" fill="#fff" stroke="#108010" />
      <path d="M323 648l5-10 5 10z" fill="#106010" />
      <path d="M330 667.500h19v3h-19z" fill="#fff" stroke="#d01818" />
      <path d="M348 664l10 5-10 4z" fill="#c01818" />
      <circle cx="328" cy="669" r="4.500" fill="#0000d0" />
      <text x="323" y="636" fontSize="12" fontFamily="Liberation Serif, serif" fill="#008000">Y</text>
      <text x="358" y="673" fontSize="12" fontFamily="Liberation Serif, serif" fill="#f00">X</text>
    </g>
    <path d="M877 100h103v103z" fill="#dedede" />
    <path d="M877 100l103 103M929 151l51-51" stroke="#b0b0b0" strokeDasharray="1 1" />
    <path d="M912.500 110v16.500h9" stroke="#7878ff" />
    <path d="M920 126l2-7 6-10 4 2-6 11z" fill="#ffff78" stroke="#777" />
    <circle cx="929" cy="110" r="2.500" fill="#a06868" />
    <path d="M935 117c6 2 7 11-2 14v6l-8-7 8-7v4c5-1 5-6 2-8z" fill="#c080c8" />
    <path d="M956 142l14 18M974 139l-19 23" stroke="#ff7878" strokeWidth="5" />
    <path d="M954 141h5l5 7-4 4zM953 158l5-4 4 4-4 6h-4z" fill="#ff7878" />
  </Canvas>
);

const Arrow = ({ d }) => (
  <Svg width="7" height="7" viewBox="0 0 7 7" shapeRendering="crispEdges" fill={dark}>
    <path d={d} />
  </Svg>
);

const FeatureTree = () => {
  const [tab, setTab] = useState("part");
  return (
    <TreePanel>
      <TreeFrame>
        <Tree>
          <TreeRow>
            <Icon name="partLight" />
            <span>Колесо5</span>
          </TreeRow>
          {treeItems.map((item) => (
            <TreeRow key={item.text} $rollback={item.rollback}>
              <Branch $through={item.child} $end={item.last}>
                {item.toggle && <Toggle $open={item.toggle === "-"} aria-label={item.text} />}
              </Branch>
              {item.child && <Branch $end />}
              <Icon name={item.icon} />
              <span>{item.text}</span>
            </TreeRow>
          ))}
        </Tree>
      </TreeFrame>
      <PanelTabs>
        {["part", "property", "config"].map((name) => (
          <PanelTab key={name} $on={tab === name} onClick={() => setTab(name)} aria-label={name}>
            <Icon name={name} />
          </PanelTab>
        ))}
      </PanelTabs>
    </TreePanel>
  );
};

const App = () => (
  <Screen>
    <GlobalStyle />
    <TitleBar>
      <Icon name="swx" />
      <Title>SolidWorks 2003 - [Эскиз4 @ Колесо5.SLDPRT]</Title>
      <Controls />
    </TitleBar>
    <MenuBar>
      <Icon name="part" />
      {menuItems.map((item) => (
        <MenuItem key={item}>{item}</MenuItem>
      ))}
      <Spacer />
      <Controls />
    </MenuBar>
    <ToolRow $height={31}>
      <Toolbar>
        <Grip />
        {renderTools(["newDoc", "open", "save", "|", "print", "preview", "|", "undo"], [], 24)}
        <Tool $w={6} aria-label="undo list"><Icon name="drop" size={12} /></Tool>
        <Sep $w={4} />
        <Gap $w={8} />
        {renderTools(["redo"], [], 24)}
        <Tool $w={6} aria-label="redo list"><Icon name="dropOff" size={12} /></Tool>
        <Sep $w={4} />
        <Gap $w={4} />
        {renderTools(["|", "light3", "gridOff", "filter", "|", "macroOff", "help"], [], 24)}
      </Toolbar>
      <Gap $w={18} />
      <Toolbar>
        <Grip />
        {renderTools(viewTools, ["hidden"])}
      </Toolbar>
      <Toolbar>
        <Grip />
        {renderTools(orientTools, ["front"])}
      </Toolbar>
    </ToolRow>
    <ToolRow $height={29}>
      <Toolbar>
        <Grip />
        {renderTools(extraTools)}
      </Toolbar>
    </ToolRow>
    <Main>
      <FeatureBars>
        {featureColumns.map((names, i) => (
          <FeatureBar key={i}>
            <HGrip />
            {renderTools(names, [], "col")}
          </FeatureBar>
        ))}
      </FeatureBars>
      <FeatureTree />
      <ViewFrame>
        <Drawing />
        <ScrollBar $vertical>
          <SplitBox />
          <ScrollButton aria-label="Вверх"><Arrow d="M3 1h1l3 4H0z" /></ScrollButton>
          <Spacer />
          <ScrollButton aria-label="Вниз"><Arrow d="M0 2h7L4 6H3z" /></ScrollButton>
        </ScrollBar>
        <ScrollBar>
          <SplitBox />
          <ScrollButton aria-label="Влево"><Arrow d="M5 0v7L1 4V3z" /></ScrollButton>
          <Spacer />
          <ScrollButton aria-label="Вправо"><Arrow d="M2 0v7l4-3V3z" /></ScrollButton>
        </ScrollBar>
      </ViewFrame>
      <RightBars>
        {sketchBars.map((names, i) => (
          <RightBar key={i}>
            <HGrip />
            {renderTools(names, ["pointer", "sketchPen"], "col")}
          </RightBar>
        ))}
      </RightBars>
    </Main>
    <StatusBar>
      <Cell $w={159}>
        <span>2.99мм 15.31мм</span>
        <span>0мм</span>
      </Cell>
      <Cell $w={83}>Определен</Cell>
      <Cell $w={6} />
      <Cell $w={158}>Редактируется:Эскиз4</Cell>
      <Cell $w={6} />
      <Cell $w={19}>
        <Svg width="14" height="15" viewBox="1 0 14 16">
          <path d="M0 0h16v16H0z" fill="#00f" />
          {light3}
        </Svg>
      </Cell>
    </StatusBar>
    <TaskBar>
      <StartButton>
        <Icon name="windows" />
        Пуск
      </StartButton>
      <Gap $w={4} />
      <Sep />
      <QuickLaunch>
        {quickIcons.map((name) => (
          <Tool key={name} aria-label={name}>
            <Icon name={name} />
          </Tool>
        ))}
      </QuickLaunch>
      <Gap $w={12} />
      <Sep />
      <Tasks>
        {tasks.map((task, i) => (
          <Task key={task.text} $on={i === 0}>
            <Icon name={task.icon} />
            <span>{task.text}</span>
          </Task>
        ))}
      </Tasks>
      <Tray>
        <span>«</span>
        <Icon name="netLight" />
        <Icon name="flag" />
        <Icon name="netPc" />
        <time>13:59</time>
      </Tray>
    </TaskBar>
  </Screen>
);

export default App;
